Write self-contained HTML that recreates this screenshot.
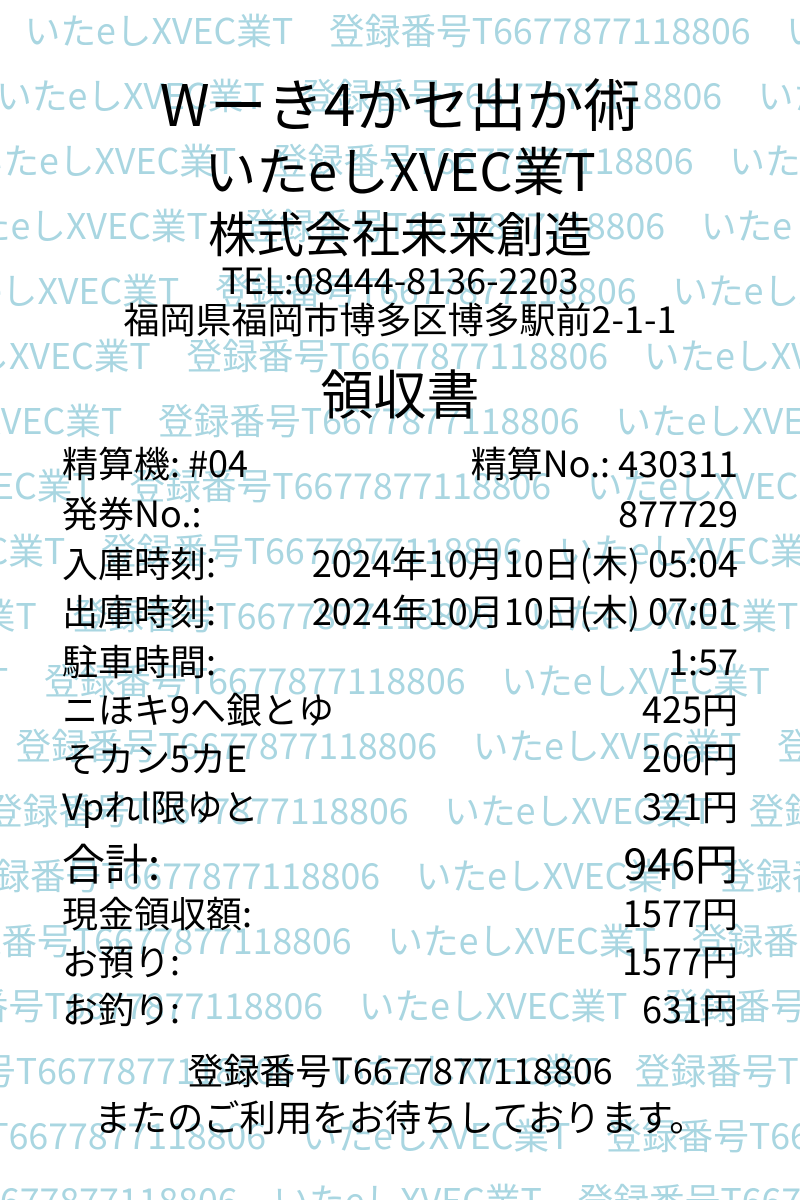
<!DOCTYPE html>
<html><head><meta charset="utf-8"><style>
html,body{margin:0;padding:0;background:#fff;width:800px;height:1200px;overflow:hidden;}
body{position:relative;font-family:"Noto Sans CJK JP","Liberation Sans",sans-serif;color:#000;}
.wm{position:absolute;left:0;top:-3px;width:800px;height:1203px;overflow:hidden;color:#a9d6e1;font-size:35.7px;line-height:65px;white-space:nowrap;}
.wm div{height:65px;}
.l{position:absolute;left:0;width:800px;height:60px;line-height:60px;text-align:center;white-space:nowrap;}
.r{position:absolute;left:62px;width:676px;height:50px;line-height:50px;font-size:36px;white-space:nowrap;}
.r span{float:right;}
</style></head><body>
<div class="wm"><div style="margin-left:-737px">いたeしXVEC業T　登録番号T6677877118806　いたeしXVEC業T　登録番号T6677877118806　いたeしXVEC業T　登録番号T6677877118806　</div><div style="margin-left:-765.5px">いたeしXVEC業T　登録番号T6677877118806　いたeしXVEC業T　登録番号T6677877118806　いたeしXVEC業T　登録番号T6677877118806　</div><div style="margin-left:-794px">いたeしXVEC業T　登録番号T6677877118806　いたeしXVEC業T　登録番号T6677877118806　いたeしXVEC業T　登録番号T6677877118806　</div><div style="margin-left:-822.5px">いたeしXVEC業T　登録番号T6677877118806　いたeしXVEC業T　登録番号T6677877118806　いたeしXVEC業T　登録番号T6677877118806　</div><div style="margin-left:-851px">いたeしXVEC業T　登録番号T6677877118806　いたeしXVEC業T　登録番号T6677877118806　いたeしXVEC業T　登録番号T6677877118806　</div><div style="margin-left:-879.5px">いたeしXVEC業T　登録番号T6677877118806　いたeしXVEC業T　登録番号T6677877118806　いたeしXVEC業T　登録番号T6677877118806　</div><div style="margin-left:-908px">いたeしXVEC業T　登録番号T6677877118806　いたeしXVEC業T　登録番号T6677877118806　いたeしXVEC業T　登録番号T6677877118806　</div><div style="margin-left:-936.5px">いたeしXVEC業T　登録番号T6677877118806　いたeしXVEC業T　登録番号T6677877118806　いたeしXVEC業T　登録番号T6677877118806　</div><div style="margin-left:-965px">いたeしXVEC業T　登録番号T6677877118806　いたeしXVEC業T　登録番号T6677877118806　いたeしXVEC業T　登録番号T6677877118806　</div><div style="margin-left:-993.5px">いたeしXVEC業T　登録番号T6677877118806　いたeしXVEC業T　登録番号T6677877118806　いたeしXVEC業T　登録番号T6677877118806　</div><div style="margin-left:-1022px">いたeしXVEC業T　登録番号T6677877118806　いたeしXVEC業T　登録番号T6677877118806　いたeしXVEC業T　登録番号T6677877118806　</div><div style="margin-left:-1050.5px">いたeしXVEC業T　登録番号T6677877118806　いたeしXVEC業T　登録番号T6677877118806　いたeしXVEC業T　登録番号T6677877118806　</div><div style="margin-left:-1079px">いたeしXVEC業T　登録番号T6677877118806　いたeしXVEC業T　登録番号T6677877118806　いたeしXVEC業T　登録番号T6677877118806　</div><div style="margin-left:-1107.5px">いたeしXVEC業T　登録番号T6677877118806　いたeしXVEC業T　登録番号T6677877118806　いたeしXVEC業T　登録番号T6677877118806　</div><div style="margin-left:-1136px">いたeしXVEC業T　登録番号T6677877118806　いたeしXVEC業T　登録番号T6677877118806　いたeしXVEC業T　登録番号T6677877118806　</div><div style="margin-left:-1164.5px">いたeしXVEC業T　登録番号T6677877118806　いたeしXVEC業T　登録番号T6677877118806　いたeしXVEC業T　登録番号T6677877118806　</div><div style="margin-left:-1193px">いたeしXVEC業T　登録番号T6677877118806　いたeしXVEC業T　登録番号T6677877118806　いたeしXVEC業T　登録番号T6677877118806　</div><div style="margin-left:-1221.5px">いたeしXVEC業T　登録番号T6677877118806　いたeしXVEC業T　登録番号T6677877118806　いたeしXVEC業T　登録番号T6677877118806　</div><div style="margin-left:-1250px">いたeしXVEC業T　登録番号T6677877118806　いたeしXVEC業T　登録番号T6677877118806　いたeしXVEC業T　登録番号T6677877118806　</div></div>

<div class="l" style="top:72px;font-size:57px;">Wーき4かセ出か術</div>
<div class="l" style="top:139px;font-size:52px;">いたeしXVEC業T</div>
<div class="l" style="top:201px;font-size:48px;">株式会社未来創造</div>
<div class="l" style="top:249px;font-size:36px;">TEL:08444-8136-2203</div>
<div class="l" style="top:288px;font-size:36px;">福岡県福岡市博多区博多駅前2-1-1</div>
<div class="l" style="top:362px;font-size:53px;">領収書</div>

<div class="r" style="top:437px">精算機: #04<span>精算No.: 430311</span></div>
<div class="r" style="top:487px">発券No.:<span>877729</span></div>
<div class="r" style="top:537px">入庫時刻:<span>2024年10月10日(木) 05:04</span></div>
<div class="r" style="top:585px">出庫時刻:<span>2024年10月10日(木) 07:01</span></div>
<div class="r" style="top:635px">駐車時間:<span>1:57</span></div>
<div class="r" style="top:683px">ニほキ9へ銀とゆ<span>425円</span></div>
<div class="r" style="top:732px">そカン5カE<span>200円</span></div>
<div class="r" style="top:780px">Vpれl限ゆと<span>321円</span></div>
<div class="r" style="top:834px;font-size:43px;height:56px;line-height:56px;">合計:<span>946円</span></div>
<div class="r" style="top:887px">現金領収額:<span>1577円</span></div>
<div class="r" style="top:935px">お預り:<span>1577円</span></div>
<div class="r" style="top:983px">お釣り:<span>631円</span></div>

<div class="l" style="top:1039px;font-size:36px;">登録番号T6677877118806</div>
<div class="l" style="top:1086px;font-size:36.3px;">またのご利用をお待ちしております。</div>
</body></html>
